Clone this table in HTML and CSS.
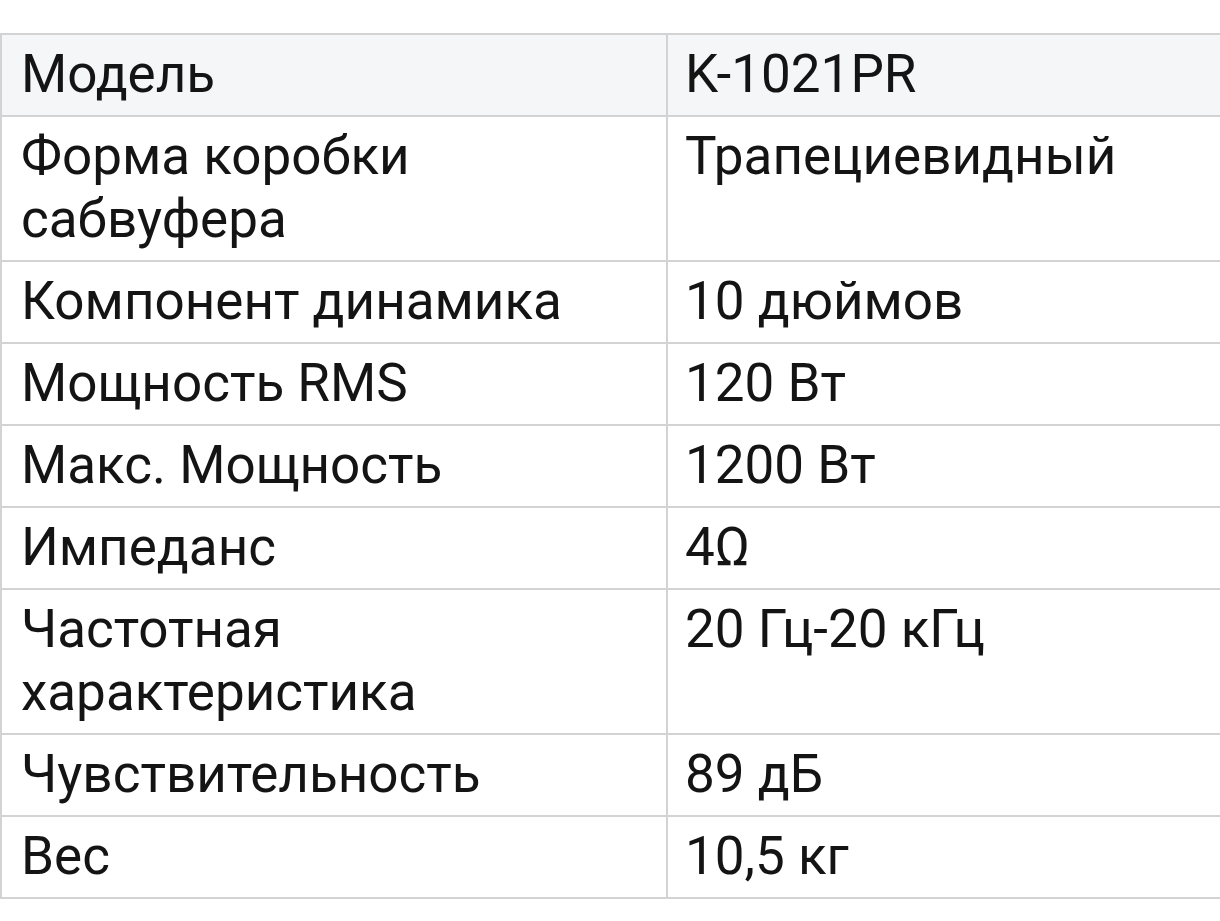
FILE: index.html
```html
<!DOCTYPE html>
<html lang="ru">
<head>
<meta charset="utf-8">
<title>Характеристики</title>
<link rel="stylesheet" href="styles.css">
</head>
<body>
<div class="wrap">
<table class="specs">
<tbody>
<tr class="head"><td class="name">Модель</td><td class="val">K-1021PR</td></tr>
<tr><td class="name">Форма коробки<br>сабвуфера</td><td class="val">Трапециевидный</td></tr>
<tr><td class="name">Компонент динамика</td><td class="val">10 дюймов</td></tr>
<tr><td class="name">Мощность RMS</td><td class="val">120 Вт</td></tr>
<tr><td class="name">Макс. Мощность</td><td class="val">1200 Вт</td></tr>
<tr><td class="name">Импеданс</td><td class="val">4Ω</td></tr>
<tr><td class="name">Частотная<br>характеристика</td><td class="val">20 Гц-20 кГц</td></tr>
<tr><td class="name">Чувствительность</td><td class="val">89 дБ</td></tr>
<tr><td class="name">Вес</td><td class="val">10,5 кг</td></tr>
</tbody>
</table>
</div>
</body>
</html>
```

FILE: styles.css
```css
html, body {
  margin: 0;
  padding: 0;
  background: #ffffff;
}
body {
  font-family: Roboto, "Noto Sans", sans-serif;
  color: #141414;
  overflow: hidden;
}
.wrap {
  padding-top: 33px;
  width: 1240px;
}
.specs {
  border-collapse: collapse;
  width: 1240px;
  table-layout: fixed;
}
.specs td {
  border: 2px solid #d3d3d3;
  font-size: 53px;
  line-height: 63px;
  padding: 8px 18px 9px 19px;
  vertical-align: top;
  font-weight: 400;
}
.specs td.name {
  width: 627px;
  padding-left: 19px;
}
.specs td.val {
  padding-left: 17px;
}
.specs tr.head td {
  background: #f5f6f8;
}
```
